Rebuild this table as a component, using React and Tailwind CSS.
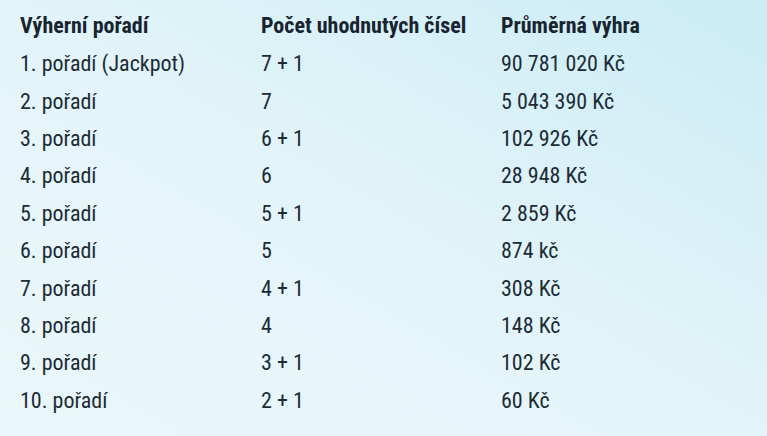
const rows = [
  ['1. pořadí (Jackpot)', '7 + 1', '90 781 020 Kč'],
  ['2. pořadí', '7', '5 043 390 Kč'],
  ['3. pořadí', '6 + 1', '102 926 Kč'],
  ['4. pořadí', '6', '28 948 Kč'],
  ['5. pořadí', '5 + 1', '2 859 Kč'],
  ['6. pořadí', '5', '874 kč'],
  ['7. pořadí', '4 + 1', '308 Kč'],
  ['8. pořadí', '4', '148 Kč'],
  ['9. pořadí', '3 + 1', '102 Kč'],
  ['10. pořadí', '2 + 1', '60 Kč'],
];

export default function App() {
  return (
    <div
      className="w-[767px] h-[436px] overflow-hidden pl-[20px] pt-[7px] text-[#1d2b36] bg-[linear-gradient(30deg,#eaf7fa_0%,#e4f5f9_45%,#d9f1f7_70%,#cbebf5_100%)]"
      style={{ fontFamily: '"Roboto Condensed", "Liberation Sans Narrow", Roboto, sans-serif' }}
    >
      <div className="grid grid-cols-[241px_240px_1fr] h-[36px] items-center text-[22px] font-bold text-[#17242f]">
        <div>Výherní pořadí</div>
        <div>Počet uhodnutých čísel</div>
        <div>Průměrná výhra</div>
      </div>
      <div className="mt-[2px]">
        {rows.map((r) => (
          <div key={r[0]} className="grid grid-cols-[241px_240px_1fr] h-[37.4px] items-center text-[22px]">
            <div>{r[0]}</div>
            <div>{r[1]}</div>
            <div>{r[2]}</div>
          </div>
        ))}
      </div>
    </div>
  );
}
